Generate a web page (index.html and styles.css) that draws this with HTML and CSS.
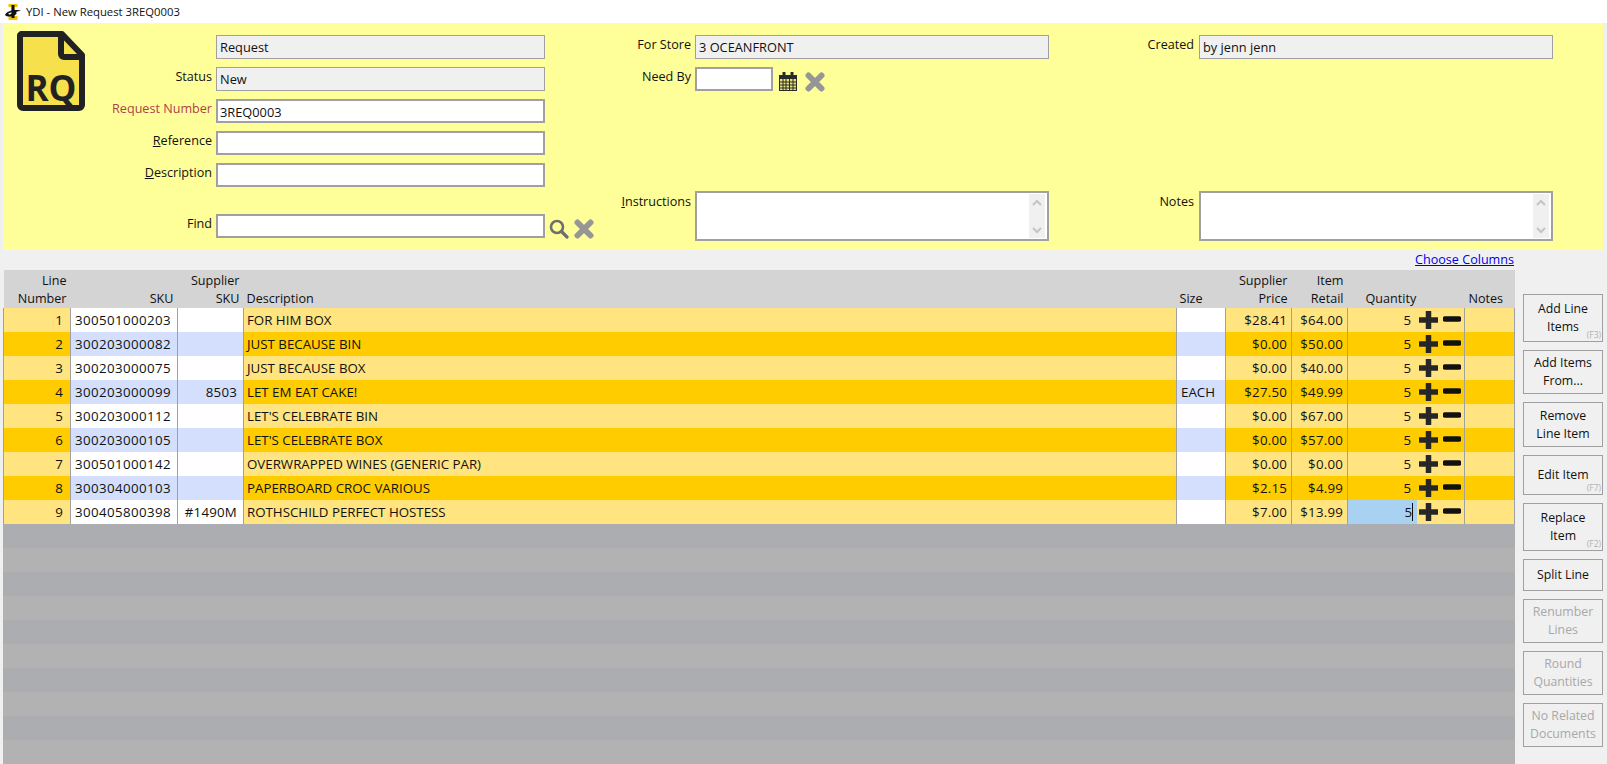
FILE: index.html
```html
<!DOCTYPE html>
<html lang="en">
<head>
  <meta charset="utf-8">
  <title>YDI - New Request 3REQ0003</title>
  <link rel="stylesheet" href="styles.css">
</head>
<body>
  <div class="titlebar">
    <svg class="app-icon" width="16" height="16" viewBox="0 0 16 16">
      <path d="M3.500 0h9v3h-3v9h3v4h-9v-4h3V3h-3z" fill="#f2c200"/>
      <path d="M6.500 1h3v13h-3z" fill="#111"/>
      <path d="M0 11c1-3 6-5 11-5 2 0 4 0 5 1-2 0-3 0-5 1 1 1 1 2-1 3-3 2-8 2-10 0zM3 10c2 1 4 0 5-2-2 0-4 1-5 2z" fill="#111"/>
    </svg>
    <span>YDI - New Request 3REQ0003</span>
  </div>

  <div class="header">
    <svg class="doc-logo" width="68" height="80" viewBox="0 0 68 80">
      <path d="M4 3h41l20 21v50a3 3 0 0 1-3 3H6a3 3 0 0 1-3-3V4z" fill="#f6e04c" stroke="#222" stroke-width="6" stroke-linejoin="round"/>
      <path d="M44 3v20a3 3 0 0 0 3 3h18" fill="none" stroke="#222" stroke-width="6"/>
      <text x="34" y="70" class="doc-logo-text" text-anchor="middle">RQ</text>
    </svg>

    <div class="form-col col-main">
      <div class="row"><span class="label"></span><div class="field readonly">Request</div></div>
      <div class="row"><span class="label">Status</span><div class="field readonly">New</div></div>
      <div class="row"><span class="label required">Request Number</span><div class="field">3REQ0003</div></div>
      <div class="row"><span class="label"><u>R</u>eference</span><div class="field"></div></div>
      <div class="row"><span class="label"><u>D</u>escription</span><div class="field"></div></div>
      <div class="row row-find">
        <span class="label">Find</span>
        <div class="field"></div>
        <svg class="find-icon" width="20" height="20" viewBox="0 0 20 20">
          <circle cx="8" cy="8" r="6" fill="none" stroke="#6e6e6e" stroke-width="2.6"/>
          <path d="M12.5 12.5l5.5 5.5" stroke="#6e6e6e" stroke-width="3.2" stroke-linecap="round"/>
        </svg>
        <svg class="clear-icon" width="20" height="20" viewBox="0 0 20 20">
          <path d="M3.500 3.500l13 13M16.500 3.500l-13 13" stroke="#969696" stroke-width="6" stroke-linecap="round"/>
        </svg>
      </div>
    </div>

    <div class="form-col col-store">
      <div class="row"><span class="label">For Store</span><div class="field readonly">3 OCEANFRONT</div></div>
      <div class="row">
        <span class="label">Need By</span>
        <div class="field field-date"></div>
        <svg class="cal-icon" width="18" height="19" viewBox="0 0 18 19">
          <path d="M0 3h18v16H0z" fill="#2a2a2a"/>
          <path d="M1 7h16v11H1z" fill="#e8e27a"/>
          <path d="M1 10h16M1 13h16M1 16h16M4 7v11M7 7v11M10.500 7v11M14 7v11" stroke="#2a2a2a" stroke-width="1"/>
          <path d="M3.500 0h3v5h-3zM11.500 0h3v5h-3z" fill="#2a2a2a"/>
        </svg>
        <svg class="clear-icon" width="20" height="20" viewBox="0 0 20 20">
          <path d="M3.500 3.500l13 13M16.500 3.500l-13 13" stroke="#969696" stroke-width="6" stroke-linecap="round"/>
        </svg>
      </div>
      <div class="row row-memo">
        <span class="label"><u>I</u>nstructions</span>
        <div class="field memo">
          <div class="memo-scroll">
            <svg width="10" height="7" viewBox="0 0 10 7"><path d="M1 6l4-4 4 4" fill="none" stroke="#c4c4c4" stroke-width="2"/></svg>
            <svg width="10" height="7" viewBox="0 0 10 7"><path d="M1 1l4 4 4-4" fill="none" stroke="#c4c4c4" stroke-width="2"/></svg>
          </div>
        </div>
      </div>
    </div>

    <div class="form-col col-created">
      <div class="row"><span class="label">Created</span><div class="field readonly">by jenn jenn</div></div>
      <div class="row row-memo">
        <span class="label">Notes</span>
        <div class="field memo">
          <div class="memo-scroll">
            <svg width="10" height="7" viewBox="0 0 10 7"><path d="M1 6l4-4 4 4" fill="none" stroke="#c4c4c4" stroke-width="2"/></svg>
            <svg width="10" height="7" viewBox="0 0 10 7"><path d="M1 1l4 4 4-4" fill="none" stroke="#c4c4c4" stroke-width="2"/></svg>
          </div>
        </div>
      </div>
    </div>
  </div>

  <div class="main">
    <div class="lines">
      <div class="choose"><a href="#">Choose Columns</a></div>
      <table class="grid">
        <colgroup>
          <col class="c-line"><col class="c-sku"><col class="c-ssku"><col class="c-desc"><col class="c-size">
          <col class="c-price"><col class="c-retail"><col class="c-qty"><col class="c-notes">
        </colgroup>
        <thead>
          <tr>
            <th class="num">Line<br>Number</th>
            <th class="num">SKU</th>
            <th class="num">Supplier<br>SKU</th>
            <th>Description</th>
            <th>Size</th>
            <th class="num">Supplier<br>Price</th>
            <th class="num">Item<br>Retail</th>
            <th class="th-qty">Quantity</th>
            <th class="th-notes">Notes</th>
          </tr>
        </thead>
        <tbody id="rows"></tbody>
      </table>
      <div class="empty"></div>
    </div>

    <div class="actions">
      <div class="btn b48">Add Line<br>Items<span class="key">(F3)</span></div>
      <div class="btn b44">Add Items<br>From...</div>
      <div class="btn b45">Remove<br>Line Item</div>
      <div class="btn b40">Edit Item<span class="key">(F7)</span></div>
      <div class="btn b48">Replace<br>Item<span class="key">(F2)</span></div>
      <div class="btn b32">Split Line</div>
      <div class="btn b44 disabled">Renumber<br>Lines</div>
      <div class="btn b44 disabled">Round<br>Quantities</div>
      <div class="btn b44 disabled">No Related<br>Documents</div>
    </div>
  </div>

  <script src="lines.js"></script>
</body>
</html>
```

FILE: styles.css
```css
html, body {
  margin: 0;
  height: 764px;
  overflow: hidden;
}

body {
  background: #f0f0f0;
  color: #111;
  font-family: "Open Sans", "Noto Sans", sans-serif;
  font-size: 12.6px;
  display: flex;
  flex-direction: column;
}

.titlebar {
  height: 23px;
  background: #fff;
  display: flex;
  align-items: center;
  gap: 5px;
  padding-left: 5px;
  font-size: 11.3px;
}

.header {
  height: 215px;
  margin: 0 4px 0 3px;
  padding: 12px 0 0 14px;
  background: #ffff99;
  display: flex;
}

.doc-logo {
  margin-top: -4px;
  flex: none;
}

.doc-logo-text {
  font-family: "Open Sans", sans-serif;
  font-size: 35px;
  font-weight: 700;
  fill: #222;
}

.form-col {
  display: flex;
  flex-direction: column;
  gap: 8px;
}

.col-main { width: 510px; }
.col-store { width: 454px; }

.row {
  display: flex;
  gap: 4px;
  height: 24px;
}

.label {
  flex: none;
  text-align: right;
  line-height: 20px;
  white-space: nowrap;
}

.row-memo .label { margin-top: 1px; }

.col-main .label { width: 127px; }
.col-store .label { width: 96px; }
.col-created .label { width: 145px; margin-right: 1px; }

.required { color: #b0404f; }

.field {
  box-sizing: border-box;
  width: 329px;
  height: 24px;
  border: 2px solid #a0a0a0;
  background: #fff;
  padding-left: 2px;
  font-size: 12.8px;
  line-height: 22px;
  white-space: nowrap;
}

.field.readonly {
  border-width: 1px;
  padding-left: 3px;
  background: #f0f0f0;
}

.col-store .field,
.col-created .field { width: 354px; }

.col-store .field-date { width: 78px; }

.row-find { margin-top: 19px; }
.row-memo { height: 50px; }

.col-store .row-memo { margin-top: 92px; }
.col-created .row-memo { margin-top: 124px; }

.memo {
  height: 50px !important;
  display: flex;
  justify-content: flex-end;
}

.memo-scroll {
  box-sizing: border-box;
  width: 16px;
  height: 44px;
  margin: 1px 2px 0 0;
  padding: 5px 0 4px;
  background: #f0f0f0;
  display: flex;
  flex-direction: column;
  justify-content: space-between;
  align-items: center;
}

.find-icon {
  margin: 5px 0 0 0;
  flex: none;
}

.clear-icon {
  margin: 5px 0 0 1px;
  flex: none;
}

.cal-icon {
  margin: 5px 3px 0 2px;
  flex: none;
}

.main {
  flex: 1;
  display: flex;
  min-height: 0;
  padding-left: 3px;
}

.lines {
  width: 1512px;
  display: flex;
  flex-direction: column;
}

.choose {
  height: 20px;
  line-height: 20px;
  text-align: right;
  padding-right: 1px;
}

.choose a { color: #0000e6; }

.grid {
  width: 1511px;
  table-layout: fixed;
  border-collapse: collapse;
}

.c-line { width: 67px; }
.c-sku { width: 107px; }
.c-ssku { width: 66px; }
.c-desc { width: 933px; }
.c-size { width: 49px; }
.c-price { width: 66px; }
.c-retail { width: 56px; }
.c-qty { width: 117px; }
.c-notes { width: 50px; }

.grid th {
  height: 38px;
  padding: 0 4px 0 3px;
  box-sizing: border-box;
  background: #d4d4d4;
  font-weight: 400;
  line-height: 18px;
  text-align: left;
  vertical-align: bottom;
}

.grid th.num { text-align: right; }
.grid th.th-qty { padding-left: 18px; }
.grid th.th-notes { padding-left: 4px; }

.grid td {
  height: 24px;
  padding: 0 4px 0 3px;
  box-sizing: border-box;
  border-left: 1px solid #a0a0a0;
  background: #ffe480;
  font-size: 13.3px;
  white-space: nowrap;
  overflow: hidden;
}

.grid td:last-child { border-right: 1px solid #a0a0a0; }
.grid tr.alt td { background: #ffcc00; }

.grid td.num { text-align: right; letter-spacing: 0.2px; }
.grid td.line-no { padding-right: 7px; }
.grid td.sku { padding-left: 4px; letter-spacing: 0.4px; }
.grid td.size { padding-left: 4px; }
.grid td.ssku { padding-right: 6px; }
.grid td.white { background: #fff; }
.grid tr.alt td.white { background: #d3dffc; }

.grid td.qty {
  padding: 0;
}

.qty-wrap {
  display: flex;
  align-items: center;
  height: 24px;
}

.qty-val {
  box-sizing: border-box;
  width: 69px;
  height: 24px;
  line-height: 24px;
  padding-right: 6px;
  text-align: right;
}

.qty-val.active {
  background: #a9d1f2;
  padding-right: 4px;
}

.qty-val.active span { border-right: 1px solid #111; }

.qty-plus { margin: -1px 0 0 2px; flex: none; }
.qty-minus { margin: -3px 0 0 5px; flex: none; }

.empty {
  flex: 1;
  background: repeating-linear-gradient(#acadb1 0, #acadb1 24px, #b2b2b2 24px, #b2b2b2 48px);
}

.actions {
  width: 80px;
  margin-left: 8px;
  padding-top: 44px;
  display: flex;
  flex-direction: column;
  gap: 8px;
}

.btn {
  position: relative;
  box-sizing: border-box;
  border: 1px solid #a0a0a0;
  background: #f0f0f0;
  display: flex;
  align-items: center;
  justify-content: center;
  text-align: center;
  line-height: 18px;
  font-size: 12.3px;
}

.b48 { height: 48px; }
.b45 { height: 45px; }
.b44 { height: 44px; }
.b40 { height: 40px; }
.b32 { height: 32px; }

.btn.disabled { color: #a8a8a8; }

.key {
  position: absolute;
  right: 1px;
  bottom: 1px;
  font-size: 8.5px;
  line-height: 10px;
  color: #b0b0b0;
}
```

FILE: lines.js
```js
(function() {
  'use strict';

  var data = [
    ['300501000203', '', 'FOR HIM BOX', '', '$28.41', '$64.00'],
    ['300203000082', '', 'JUST BECAUSE BIN', '', '$0.00', '$50.00'],
    ['300203000075', '', 'JUST BECAUSE BOX', '', '$0.00', '$40.00'],
    ['300203000099', '8503', 'LET EM EAT CAKE!', 'EACH', '$27.50', '$49.99'],
    ['300203000112', '', "LET'S CELEBRATE BIN", '', '$0.00', '$67.00'],
    ['300203000105', '', "LET'S CELEBRATE BOX", '', '$0.00', '$57.00'],
    ['300501000142', '', 'OVERWRAPPED WINES (GENERIC PAR)', '', '$0.00', '$0.00'],
    ['300304000103', '', 'PAPERBOARD CROC VARIOUS', '', '$2.15', '$4.99'],
    ['300405800398', '#1490M', 'ROTHSCHILD PERFECT HOSTESS', '', '$7.00', '$13.99']
  ];

  var plus = '<svg class="qty-plus" width="19" height="18" viewBox="0 0 19 18"><path d="M9.500 1v16M1 9h17" stroke="#262626" stroke-width="5.500" stroke-linecap="round"/></svg>';
  var minus = '<svg class="qty-minus" width="18" height="8" viewBox="0 0 18 8"><path d="M2 4h14" stroke="#111" stroke-width="5.500" stroke-linecap="round"/></svg>';

  var html = data.map(function(d, i) {
    var last = i === data.length - 1;
    var val = last ? '<div class="qty-val active"><span>5</span></div>' : '<div class="qty-val">5</div>';
    return '<tr' + (i % 2 ? ' class="alt"' : '') + '>' +
      '<td class="num line-no">' + (i + 1) + '</td>' +
      '<td class="white sku">' + d[0] + '</td>' +
      '<td class="white num ssku">' + d[1] + '</td>' +
      '<td>' + d[2] + '</td>' +
      '<td class="white size">' + d[3] + '</td>' +
      '<td class="num">' + d[4] + '</td>' +
      '<td class="num">' + d[5] + '</td>' +
      '<td class="qty"><div class="qty-wrap">' + val + plus + minus + '</div></td>' +
      '<td></td></tr>';
  }).join('');

  document.getElementById('rows').innerHTML = html;
})();
```
